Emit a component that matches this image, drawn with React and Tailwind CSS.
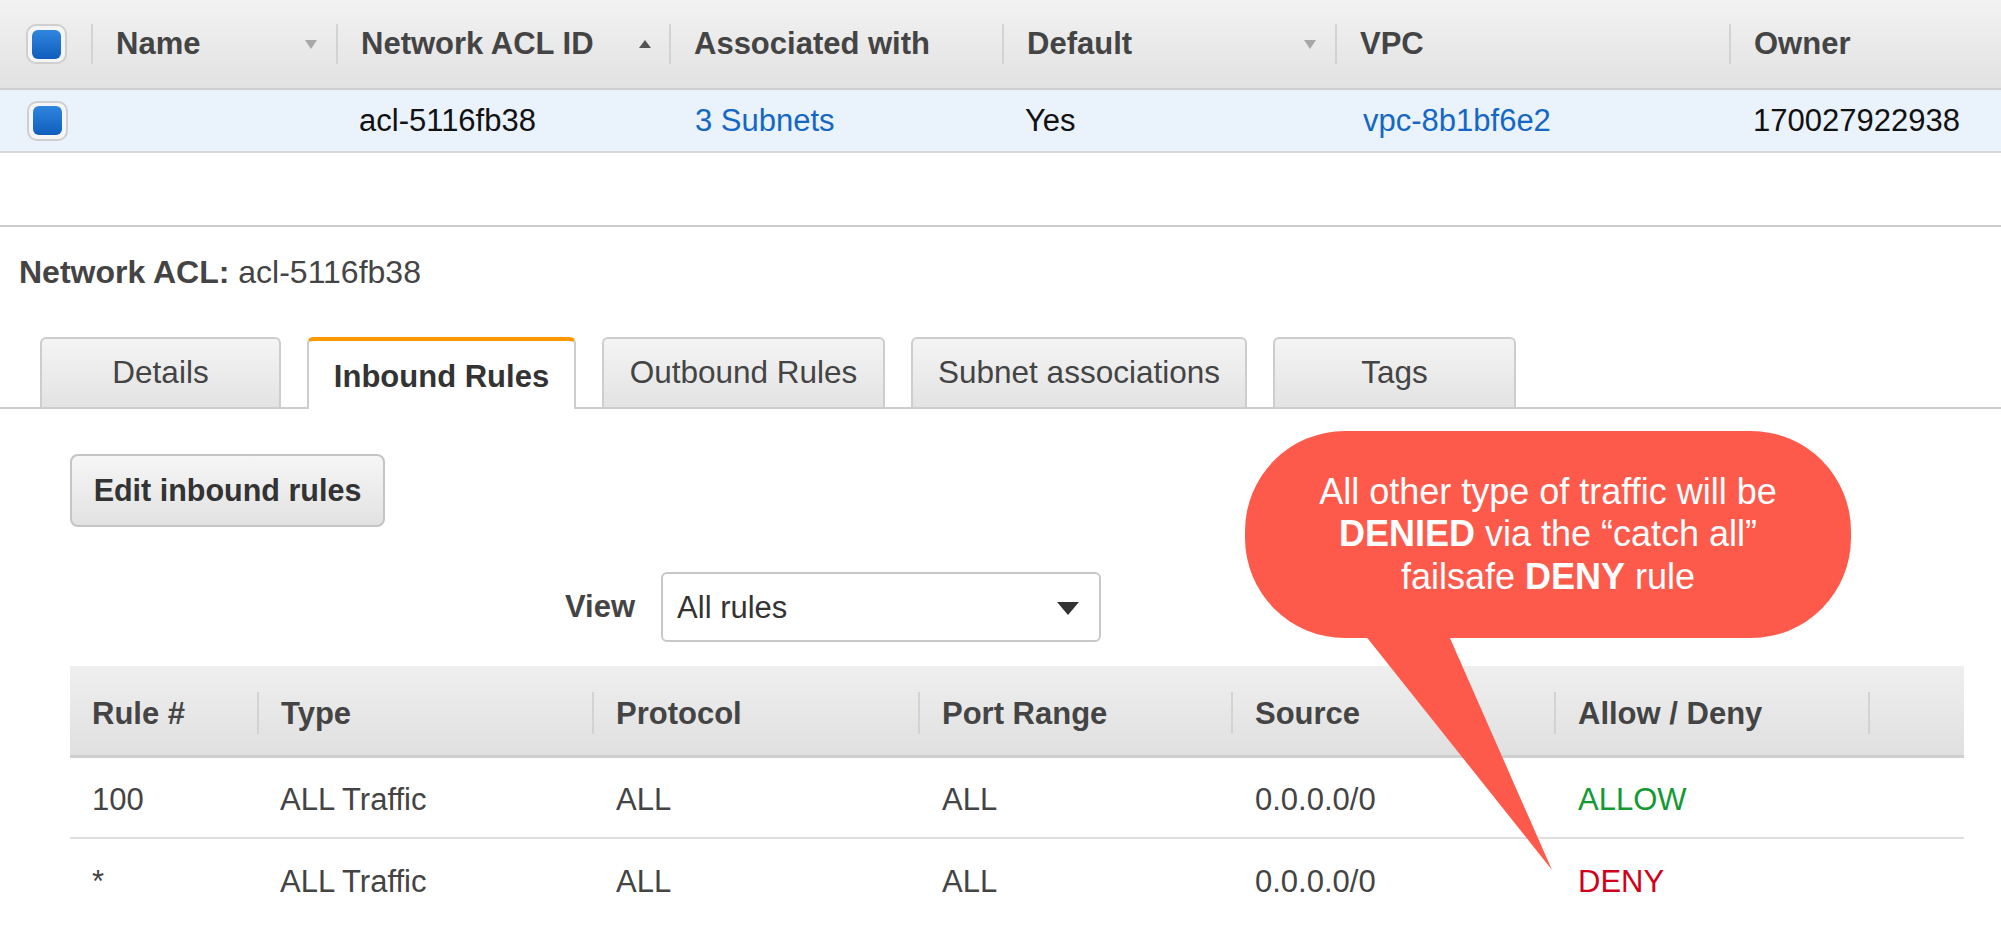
import React from 'react';

const topCols = [
  { label: 'Name', w: 'w-[245px]', sort: 'down' },
  { label: 'Network ACL ID', w: 'w-[333px]', sort: 'up' },
  { label: 'Associated with', w: 'w-[333px]' },
  { label: 'Default', w: 'w-[333px]', sort: 'down' },
  { label: 'VPC', w: 'w-[394px]' },
  { label: 'Owner', w: 'flex-1' },
];

const ruleCols = [
  { label: 'Rule #', w: 'w-[187px]' },
  { label: 'Type', w: 'w-[335px]' },
  { label: 'Protocol', w: 'w-[326px]' },
  { label: 'Port Range', w: 'w-[313px]' },
  { label: 'Source', w: 'w-[323px]' },
  { label: 'Allow / Deny', w: 'w-[314px]' },
  { label: '', w: 'flex-1' },
];

const rules = [
  { num: '100', type: 'ALL Traffic', protocol: 'ALL', ports: 'ALL', source: '0.0.0.0/0', action: 'ALLOW' },
  { num: '*', type: 'ALL Traffic', protocol: 'ALL', ports: 'ALL', source: '0.0.0.0/0', action: 'DENY' },
];

const tabs = [
  { label: 'Details', w: 'w-[241px]' },
  { label: 'Inbound Rules', w: 'w-[269px]', active: true },
  { label: 'Outbound Rules', w: 'w-[283px]' },
  { label: 'Subnet associations', w: 'w-[336px]' },
  { label: 'Tags', w: 'w-[243px]' },
];

export default function App() {
  return (
    <div className="relative w-[2001px] h-[930px] overflow-hidden bg-white font-['Liberation_Sans',Arial,sans-serif] text-[31px] text-[#444]">
      {/* ACL list table */}
      <div className="flex h-[90px] border-b-2 border-[#cdcdcd] bg-linear-to-b from-[#f2f2f2] to-[#e2e2e2]">
        <div className="w-[91px] flex items-center pl-[26px]">
          <Checkbox />
        </div>
        {topCols.map(col => (
          <div key={col.label} className={`${col.w} flex items-center`}>
            <div className="w-[2px] h-[40px] bg-[#d3d3d3]" />
            <span className="pl-[23px] font-bold">{col.label}</span>
            <div className="flex-1" />
            {col.sort && <SortIcon dir={col.sort} />}
          </div>
        ))}
      </div>
      <div className="flex h-[63px] border-b-2 border-[#d9d9d9] bg-[#eaf2fc] text-[#111]">
        <div className="w-[91px] flex items-center pl-[27px]">
          <Checkbox />
        </div>
        <div className="w-[245px]" />
        <div className="w-[333px] flex items-center pl-[23px] pt-[2px]">acl-5116fb38</div>
        <div className="w-[333px] flex items-center pl-[26px] pt-[2px] text-[#1467c4]">3 Subnets</div>
        <div className="w-[333px] flex items-center pl-[23px] pt-[2px]">Yes</div>
        <div className="w-[394px] flex items-center pl-[28px] pt-[2px] text-[#1467c4]">vpc-8b1bf6e2</div>
        <div className="flex-1 flex items-center pl-[24px] pt-[2px]">170027922938</div>
      </div>

      {/* detail pane */}
      <div className="mt-[72px] border-t-2 border-[#cdcdcd]">
        <div className="pt-[26px] pl-[19px] leading-[38px] text-[32px]">
          <span className="font-bold">Network ACL:</span> acl-5116fb38
        </div>

        <div className="mt-[46px] flex items-end gap-[26px] pl-[40px] h-[72px] border-b-2 border-[#cdcdcd]">
          {tabs.map(tab =>
            tab.active ? (
              <div
                key={tab.label}
                className={`${tab.w} h-[72px] -mb-[2px] flex items-center justify-center rounded-t-[6px] border-t-4 border-x-2 border-t-[#ff9900] border-x-[#cdcdcd] bg-white font-bold text-[#333]`}
              >
                <span className="pt-[4px]">{tab.label}</span>
              </div>
            ) : (
              <div
                key={tab.label}
                className={`${tab.w} h-[70px] flex items-center justify-center rounded-t-[6px] border-2 border-b-0 border-[#cdcdcd] bg-linear-to-b from-[#f4f4f4] to-[#e3e3e3] text-[31.5px]`}
              >
                {tab.label}
              </div>
            )
          )}
        </div>

        <div className="pl-[70px] pt-[45px]">
          <button className="w-[315px] h-[73px] rounded-[8px] border-2 border-[#c4c4c4] bg-linear-to-b from-[#f6f6f6] to-[#e2e2e2] font-bold text-[#333] text-[30.5px]">
            Edit inbound rules
          </button>
        </div>

        <div className="flex items-center pl-[565px] pt-[45px]">
          <span className="font-bold">View</span>
          <div className="ml-[26px] w-[440px] h-[70px] flex items-center rounded-[6px] border-2 border-[#c8c8c8] bg-white pl-[14px] pr-[20px] pt-[2px] text-[#333]">
            <span className="flex-1">All rules</span>
            <svg width="22" height="13" viewBox="0 0 22 13">
              <polygon points="0,0 22,0 11,13" fill="#333" />
            </svg>
          </div>
        </div>

        {/* rules table */}
        <div className="ml-[70px] mt-[24px] w-[1894px]">
          <div className="flex h-[92px] border-b-[3px] border-[#cfcfcf] bg-linear-to-b from-[#efefef] to-[#e0e0e0]">
            {ruleCols.map((col, i) => (
              <div key={i} className={`${col.w} flex items-center pt-[4px]`}>
                {i > 0 && <div className="w-[2px] h-[42px] bg-[#d3d3d3]" />}
                <span className="font-bold pl-[22px] pt-[4px]">{col.label}</span>
              </div>
            ))}
          </div>
          {rules.map((rule, i) => (
            <div key={i} className={`flex h-[81px] pt-[6px] ${i === 0 ? 'border-b-2 border-[#dedede]' : ''}`}>
              <div className="w-[187px] flex items-center pl-[22px]">{rule.num}</div>
              <div className="w-[335px] flex items-center pl-[23px]">{rule.type}</div>
              <div className="w-[326px] flex items-center pl-[24px]">{rule.protocol}</div>
              <div className="w-[313px] flex items-center pl-[24px]">{rule.ports}</div>
              <div className="w-[323px] flex items-center pl-[24px]">{rule.source}</div>
              <div
                className={`w-[314px] flex items-center pl-[24px] ${
                  rule.action === 'ALLOW' ? 'text-[#139a32]' : 'text-[#d0021b]'
                }`}
              >
                {rule.action}
              </div>
            </div>
          ))}
        </div>
      </div>

      {/* callout annotation */}
      <div className="absolute left-[1245px] top-[431px] w-[606px] h-[207px] rounded-[100px] bg-[#fe5a4c] flex items-center justify-center text-center text-white text-[36px] leading-[42.5px]">
        <p>
          All other type of traffic will be
          <br />
          <b>DENIED</b> via the “catch all”
          <br />
          failsafe <b>DENY</b> rule
        </p>
      </div>
      <svg className="absolute left-[1340px] top-[615px]" width="220" height="260" viewBox="0 0 220 260">
        <polygon points="13,5 102,5 212,255" fill="#fe5a4c" />
      </svg>
    </div>
  );
}

function Checkbox() {
  return (
    <div className="w-[41px] h-[40px] flex items-center justify-center rounded-[10px] border-2 border-[#cfcfcf] bg-[#f5f5f5]">
      <div className="w-[29px] h-[29px] rounded-[6px] bg-linear-to-b from-[#2f86de] to-[#0f5dbd]" />
    </div>
  );
}

function SortIcon({ dir }) {
  if (dir === 'up') {
    return (
      <svg className="mr-[18px]" width="12" height="8" viewBox="0 0 12 8">
        <polygon points="0,8 12,8 6,0" fill="#555" />
      </svg>
    );
  }
  return (
    <svg className="mr-[19px]" width="12" height="9" viewBox="0 0 12 9">
      <polygon points="0,0 12,0 6,9" fill="#a8a8a8" />
    </svg>
  );
}
